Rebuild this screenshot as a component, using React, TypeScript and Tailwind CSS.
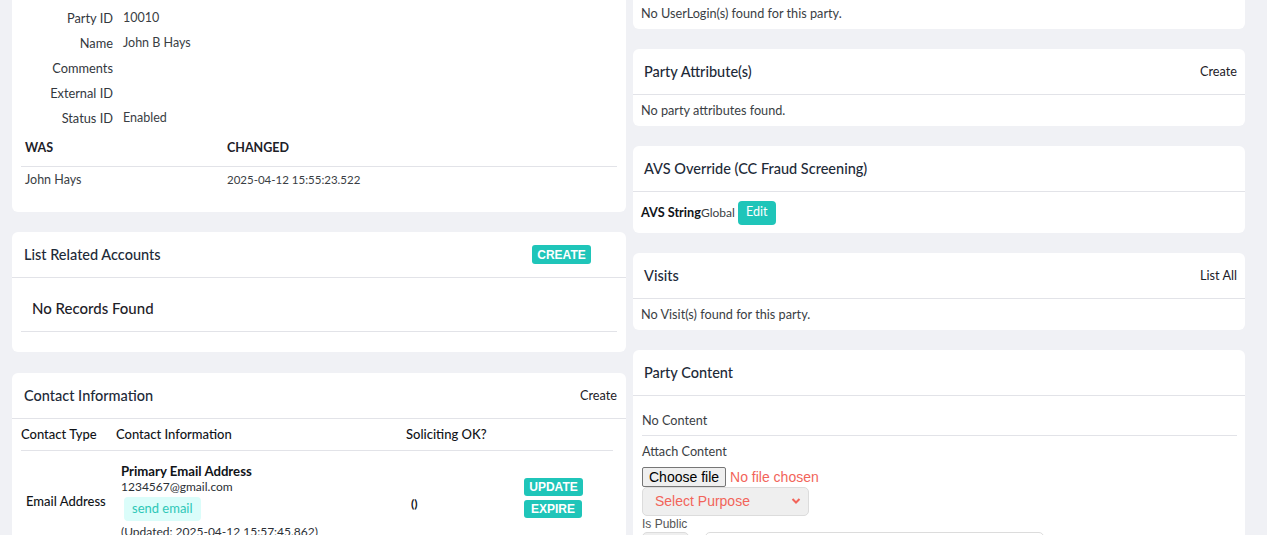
import React from 'react';

const Card = ({
  title,
  action,
  children,
}: {
  title?: string;
  action?: React.ReactNode;
  children: React.ReactNode;
}) => (
  <div className="bg-white rounded-md">
    {title && (
      <div className="h-[46px] flex items-center justify-between pl-[11px] pr-[8px] border-b border-[#e2e3e8]">
        <span className="text-[14.5px] font-medium text-[#1d2a38]">{title}</span>
        {action}
      </div>
    )}
    {children}
  </div>
);

const TealButton = ({ children, className = '' }: { children: React.ReactNode; className?: string }) => (
  <button
    className={`bg-[#1fc5b9] text-white font-bold text-[12px] font-['Liberation_Sans',Arial,sans-serif] rounded-[3px] px-[5px] leading-none ${className}`}
  >
    {children}
  </button>
);

const fields: [string, string][] = [
  ['Party ID', '10010'],
  ['Name', 'John B Hays'],
  ['Comments', ''],
  ['External ID', ''],
  ['Status ID', 'Enabled'],
];

const App = () => {
  return (
    <div className="h-[535px] overflow-hidden bg-[#f0f1f5] font-['Lato',sans-serif] text-[#2b2f36]">
      <div className="grid grid-cols-[614px_612px] gap-[7px] pl-[12px]">
        {/* left column */}
        <div className="flex flex-col -mt-[8px]">
          <div className="bg-white rounded-md pt-[14px] pb-[19px]">
            {fields.map(([label, value]) => (
              <div key={label} className="h-[25px] flex items-center">
                <span className="w-[101px] text-right text-[12.8px] text-[#33373d]">{label}</span>
                <span className="ml-[10px] text-[12.5px] text-[#3a3e44]">{value}</span>
              </div>
            ))}
            <div className="mx-[9px]">
              <div className="h-[36px] grid grid-cols-[202px_1fr] items-center border-b border-[#e2e3e8] text-[12.5px] font-bold text-[#1d2128]">
                <span className="pl-[4px]">WAS</span>
                <span className="pl-[4px]">CHANGED</span>
              </div>
              <div className="h-[26px] grid grid-cols-[202px_1fr] items-center text-[#3a3e44]">
                <span className="pl-[4px] text-[12.5px]">John Hays</span>
                <span className="pl-[4px] text-[11.5px]">2025-04-12 15:55:23.522</span>
              </div>
            </div>
          </div>

          <div className="mt-[20px] bg-white rounded-md">
            <div className="h-[46px] flex items-center justify-between pl-[12px] pr-[35px] border-b border-[#e2e3e8]">
              <span className="text-[14.5px] font-medium text-[#1d2a38]">List Related Accounts</span>
              <TealButton className="h-[19px] w-[59px]">CREATE</TealButton>
            </div>
            <div className="pt-[8px] pb-[20px] px-[9px]">
              <div className="h-[46px] flex items-center pl-[11px] border-b border-[#e2e3e8] text-[15px] font-medium text-[#1d2128]">
                No Records Found
              </div>
            </div>
          </div>

          <div className="mt-[21px] bg-white rounded-md">
            <div className="h-[46px] flex items-center justify-between pl-[12px] pr-[9px] border-b border-[#e2e3e8]">
              <span className="text-[14.5px] font-medium text-[#1d2a38]">Contact Information</span>
              <span className="text-[12.7px] text-[#1d2128]">Create</span>
            </div>
            <div className="ml-[9px] mr-[13px]">
              <div className="h-[32px] grid grid-cols-[95px_290px_113px_1fr] items-center border-b border-[#e2e3e8] text-[13px] font-medium text-[#111418]">
                <span>Contact Type</span>
                <span>Contact Information</span>
                <span>Soliciting OK?</span>
                <span />
              </div>
              <div className="grid grid-cols-[95px_290px_113px_1fr] text-[12px] text-[#111418]">
                <div className="flex items-center pl-[5px] text-[13px] font-medium">Email Address</div>
                <div className="flex flex-col items-start pl-[5px] pt-[12px] pb-[12px]">
                  <span className="h-[16px] leading-[16px] text-[13.2px] font-bold">Primary Email Address</span>
                  <span className="h-[16px] leading-[16px] text-[#2b2f36]">1234567@gmail.com</span>
                  <span className="mt-[2px] ml-[3px] h-[24px] px-[8px] flex items-center rounded-[4px] bg-[#dbfdfa] text-[#2ec7b7] text-[13px]">
                    send email
                  </span>
                  <span className="mt-[3px] h-[16px] leading-[16px] text-[#2b2f36]">(Updated: 2025-04-12 15:57:45.862)</span>
                </div>
                <div className="flex items-center pl-[5px] pt-[4px] font-bold">()</div>
                <div className="flex flex-col justify-center items-start gap-[4px] pl-[5px] pb-[7px]">
                  <TealButton className="h-[18px] w-[59px]">UPDATE</TealButton>
                  <TealButton className="h-[18px] w-[58px]">EXPIRE</TealButton>
                </div>
              </div>
            </div>
          </div>
        </div>

        {/* right column */}
        <div className="flex flex-col gap-[20px] -mt-[48px]">
          <Card title="User Login(s)">
            <div className="h-[31px] flex items-center px-[8px] text-[12.7px] text-[#3a3e44]">
              No UserLogin(s) found for this party.
            </div>
          </Card>
          <Card title="Party Attribute(s)" action={<span className="text-[12.7px] text-[#1d2128]">Create</span>}>
            <div className="h-[31px] flex items-center px-[8px] text-[12.7px] text-[#3a3e44]">
              No party attributes found.
            </div>
          </Card>
          <Card title="AVS Override (CC Fraud Screening)">
            <div className="h-[41px] flex items-center px-[8px]">
              <span className="text-[12.7px] font-bold text-[#111418]">AVS String</span>
              <span className="text-[12px] text-[#3a3e44]">Global</span>
              <button className="ml-[3px] h-[24px] w-[38px] rounded-[4px] bg-[#1fc5b9] text-white text-[12.5px]">Edit</button>
            </div>
          </Card>
          <Card title="Visits" action={<span className="text-[12.7px] text-[#1d2128]">List All</span>}>
            <div className="h-[31px] flex items-center px-[8px] text-[12.7px] text-[#3a3e44]">
              No Visit(s) found for this party.
            </div>
          </Card>
          <Card title="Party Content">
            <div className="pl-[9px] pr-[8px] pt-[15px] pb-[40px]">
              <div className="h-[20px] flex items-center text-[12.7px] text-[#3a3e44] pb-[4px] box-content border-b border-[#e2e3e8]">
                No Content
              </div>
              <div className="mt-[9px] h-[14px] flex items-center text-[12.7px] text-[#3a3e44]">Attach Content</div>
              <div className="mt-[8px] flex flex-col items-start font-['Liberation_Sans',Arial,sans-serif]">
                <div className="flex items-center h-[20px]">
                  <button className="h-[20px] px-[6px] text-[14px] leading-none text-black bg-[#efefef] border border-[#767676] rounded-[2px]">
                    Choose file
                  </button>
                  <span className="ml-[4px] text-[14px] text-[#f2645a]">No file chosen</span>
                </div>
                <div className="relative">
                  <select className="appearance-none w-[167px] h-[29px] pl-[12px] rounded-[5px] bg-[#efefef] border border-[#dcdcdc] text-[14px] text-[#f2645a]">
                    <option>Select Purpose</option>
                  </select>
                  <svg
                    className="absolute right-[8px] top-[10px] w-[10px] h-[8px] pointer-events-none"
                    viewBox="0 0 10 8"
                    fill="none"
                    stroke="#f2645a"
                    strokeWidth="2"
                  >
                    <path d="M1.5 2l3.5 3.5L8.5 2" />
                  </svg>
                </div>
                <span className="mt-[1px] text-[12px] leading-[14px] text-[#555]">Is Public</span>
                <div className="flex gap-[16px] mt-[1px]">
                  <div className="w-[47px] h-[30px] rounded-[5px] border border-[#dcdcdc] bg-[#efefef]" />
                  <div className="w-[339px] h-[30px] rounded-[5px] border border-[#dcdcdc] bg-white" />
                </div>
              </div>
            </div>
          </Card>
        </div>
      </div>
    </div>
  );
};

export default App;
